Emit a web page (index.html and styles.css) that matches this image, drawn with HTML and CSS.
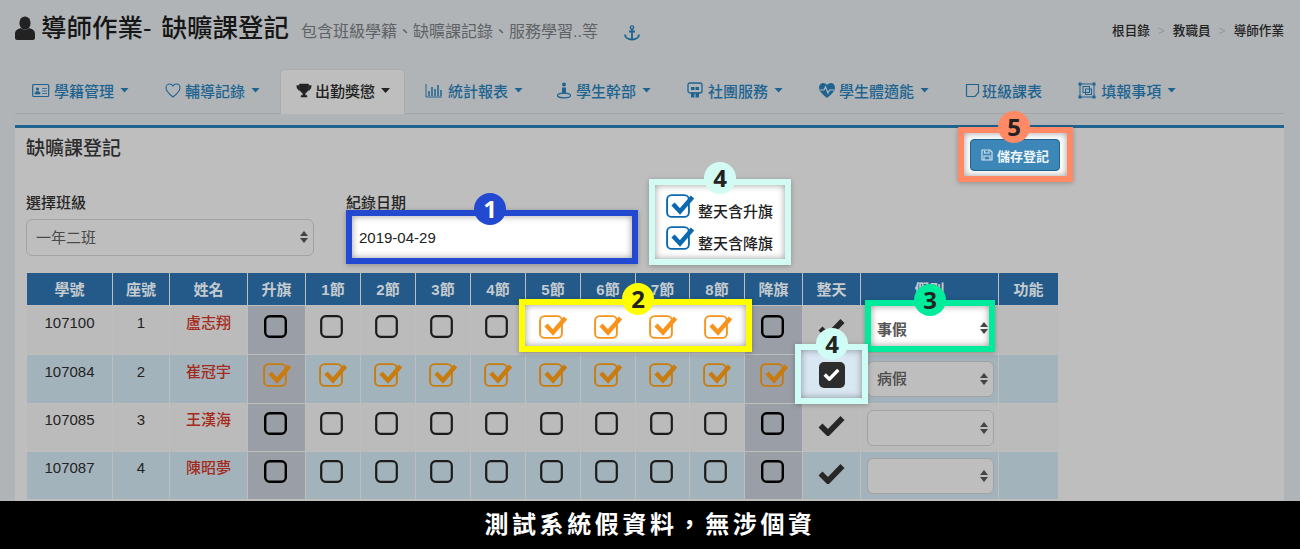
FILE: index.html
```html
<!DOCTYPE html>
<html lang="zh-Hant">
<head>
  <meta charset="UTF-8">
  <title>導師作業- 缺曠課登記</title>
  <link rel="stylesheet" href="styles.css">
</head>
<body>
  <svg class="defs" width="0" height="0">
    <symbol id="box" viewBox="0 0 28 24"><rect x="2.2" y="2.2" width="20.6" height="20.6" rx="4.5" fill="none" stroke="currentColor"/></symbol>
    <symbol id="tick" viewBox="0 0 28 24"><rect x="1.1" y="1.1" width="21.8" height="21.8" rx="4.5" fill="none" stroke="currentColor" stroke-width="1.9"/><path d="M7 10l7 7.500L26.500 3" fill="none" stroke="currentColor" stroke-width="4.5"/></symbol>
    <symbol id="heavy" viewBox="0 0 27 21"><path d="M2.500 10.500l7.500 7.500L24.500 3" fill="none" stroke="currentColor" stroke-width="5.600"/></symbol>
  </svg>

  <header class="page-head">
    <h1 class="page-title">
      <svg width="20" height="24" viewBox="0 0 20 24"><ellipse cx="10" cy="7" rx="5.6" ry="6.6" fill="#222"/><path d="M0 22v-4c0-4 3-5 6-6 2 2 6 2 8 0 3 1 6 2 6 6v4c0 1-1 2-2 2H2c-1 0-2-1-2-2z" fill="#222"/></svg>
      導師作業- 缺曠課登記
    </h1>
    <span class="page-sub">包含班級學籍、缺曠課記錄、服務學習..等</span>
    <svg class="anchor" width="16" height="16" viewBox="0 0 16 16"><circle cx="8" cy="2.6" r="1.7" fill="none" stroke="#1f6491" stroke-width="1.4"/><path d="M8 4v10.5M5 6.5h6M1 9.5c0 3 3 5 7 5s7-2 7-5" fill="none" stroke="#1f6491" stroke-width="1.8"/></svg>
    <ol class="crumbs">
      <li>根目錄</li>
      <li>教職員</li>
      <li>導師作業</li>
    </ol>
  </header>

  <ul class="tabs">
    <li><a href="#"><svg width="22" height="17" viewBox="0 0 22 17"><rect x=".7" y="2.5" width="16" height="12" rx="1" fill="none" stroke="currentColor" stroke-width="1.2"/><circle cx="5.5" cy="7" r="1.6" fill="currentColor"/><path d="M3 12c0-2 1-2.5 2.5-2.5S8 10 8 12zM10 6.500h5M10 9h5M10 11.500h5" fill="currentColor" stroke="currentColor" stroke-width=".8"/></svg>學籍管理<i class="caret"></i></a></li>
    <li><a href="#"><svg width="20" height="17" viewBox="0 0 20 17"><path d="M8 15C3 11 1 8.500 1 6c0-2.500 1.800-4 3.700-4C6 2 7.300 2.800 8 4c.7-1.200 2-2 3.300-2C13.200 2 15 3.500 15 6c0 2.500-2 5-7 9z" fill="none" stroke="currentColor" stroke-width="1.1"/></svg>輔導記錄<i class="caret"></i></a></li>
    <li class="is-on"><a href="#"><svg width="19" height="17" viewBox="0 0 19 17"><path d="M3.500 2h9v4c0 3-2 4.500-3.300 5v2.500H11V15H5v-1.500h1.800V11C5.500 10.500 3.500 9 3.500 6zM3.500 3.500H.8c0 3 1 4.500 3.200 5M12.500 3.500h2.700c0 3-1 4.500-3.200 5" fill="currentColor" stroke="currentColor" stroke-width=".5" fill-rule="evenodd"/></svg>出勤獎懲<i class="caret"></i></a></li>
    <li class="tab-near"><a href="#"><svg width="23" height="17" viewBox="0 0 23 17"><path d="M1 2v13h16" fill="none" stroke="currentColor" stroke-width="1"/><path d="M4 9v5M7 5v9M10 7v7M13 3v11M16 8v6" stroke="currentColor" stroke-width="1.500"/></svg>統計報表<i class="caret"></i></a></li>
    <li><a href="#"><svg width="20" height="17" viewBox="0 0 20 17"><circle cx="8" cy="2.500" r="2" fill="currentColor"/><path d="M6 5.500h4v6H6z" fill="currentColor"/><ellipse cx="8" cy="13.500" rx="6.500" ry="2.300" fill="none" stroke="currentColor" stroke-width="1.200"/></svg>學生幹部<i class="caret"></i></a></li>
    <li><a href="#"><svg width="21" height="17" viewBox="0 0 21 17"><path d="M3 1h10c1.500 0 2 1 2 2v6c0 1-1 2-2 2H3c-1 0-2-1-2-2V3c0-1 .5-2 2-2z" fill="none" stroke="currentColor" stroke-width="1.300"/><path d="M4 5h3.500v3H4zM8.500 5H12v3H8.500zM4 10.500h3.500v5H4zM8.500 10.500H12v5H8.500z" fill="currentColor"/></svg>社團服務<i class="caret"></i></a></li>
    <li><a href="#"><svg width="20" height="17" viewBox="0 0 20 17"><path d="M8 16C3 12 0 9 0 5.500 0 3 2 1 4.300 1 6 1 7.300 2 8 3c.7-1 2-2 3.700-2C14 1 16 3 16 5.500 16 9 13 12 8 16z" fill="currentColor"/><path d="M1 8h4l1.500-3L9 11l1.500-3H15" fill="none" stroke="#b1b5b8" stroke-width="1.200"/></svg>學生體適能<i class="caret"></i></a></li>
    <li><a href="#"><svg width="17" height="17" viewBox="0 0 17 17"><path d="M1.500 2.500h12v8l-3.500 4H2.500c-.6 0-1-.4-1-1z" fill="none" stroke="currentColor" stroke-width="1.200"/></svg>班級課表</a></li>
    <li><a href="#"><svg width="23" height="17" viewBox="0 0 23 17"><rect x="2" y="2" width="14" height="13" fill="none" stroke="currentColor" stroke-width="1"/><rect x="5" y="4.500" width="6.500" height="6" fill="none" stroke="currentColor" stroke-width="1"/><rect x="7.500" y="7" width="6" height="5.500" fill="none" stroke="currentColor" stroke-width="1"/><path d="M.5.500h3v3h-3zM14.500.500h3v3h-3zM.5 13.500h3v3h-3zM14.500 13.500h3v3h-3z" fill="currentColor"/></svg>填報事項<i class="caret"></i></a></li>
  </ul>

  <main class="panel">
    <div class="panel-inner">
      <div class="panel-top">
        <h2 class="panel-title">缺曠課登記</h2>
        <div class="spot spot-save">
          <span class="badge badge-5">5</span>
          <button class="btn-save" type="button"><svg width="12" height="12" viewBox="0 0 12 12"><path d="M1 1h8l2 2v8H1z" fill="none" stroke="#cfe0ec" stroke-width="1.200"/><path d="M3.500 1.500v2.500h4.500V1.500M3 11V7h6v4" fill="none" stroke="#cfe0ec" stroke-width="1.100"/></svg>儲存登記</button>
        </div>
      </div>

      <div class="filters">
        <div class="field-class">
          <label class="lbl">選擇班級</label>
          <div class="pick pick-big">一年二班<i class="updown"></i></div>
        </div>
        <div class="field-date">
          <label class="lbl">紀錄日期</label>
          <div class="spot spot-date">
            <span class="badge badge-1">1</span>
            2019-04-29
          </div>
        </div>
        <div class="spot spot-flags">
          <span class="badge badge-4a">4</span>
          <div class="flag-line"><svg width="28" height="24"><use href="#tick"/></svg>整天含升旗</div>
          <div class="flag-line"><svg width="28" height="24"><use href="#tick"/></svg>整天含降旗</div>
        </div>
      </div>

      <div class="grid-wrap">
        <table class="grid">
          <colgroup>
            <col class="c85"><col class="c56"><col class="c77"><col class="c57">
            <col class="c54"><col class="c54"><col class="c54"><col class="c54">
            <col class="c54"><col class="c54"><col class="c53"><col class="c54">
            <col class="c57"><col class="c57"><col class="c137"><col class="c59">
          </colgroup>
          <thead>
            <tr><th>學號</th><th>座號</th><th>姓名</th><th>升旗</th><th>1節</th><th>2節</th><th>3節</th><th>4節</th><th>5節</th><th>6節</th><th>7節</th><th>8節</th><th>降旗</th><th>整天</th><th>假別</th><th>功能</th></tr>
          </thead>
          <tbody>
            <tr>
              <td>107100</td><td>1</td><td class="name">盧志翔</td>
              <td class="flag"><svg class="off"><use href="#box"/></svg></td>
              <td><svg class="off"><use href="#box"/></svg></td><td><svg class="off"><use href="#box"/></svg></td><td><svg class="off"><use href="#box"/></svg></td><td><svg class="off"><use href="#box"/></svg></td>
              <td></td><td></td><td></td><td></td>
              <td class="flag"><svg class="off"><use href="#box"/></svg></td>
              <td><svg class="all"><use href="#heavy"/></svg></td><td class="kind"></td><td></td>
            </tr>
            <tr class="even">
              <td>107084</td><td>2</td><td class="name">崔冠宇</td>
              <td class="flag"><svg class="on"><use href="#tick"/></svg></td>
              <td><svg class="on"><use href="#tick"/></svg></td><td><svg class="on"><use href="#tick"/></svg></td><td><svg class="on"><use href="#tick"/></svg></td><td><svg class="on"><use href="#tick"/></svg></td>
              <td><svg class="on"><use href="#tick"/></svg></td><td><svg class="on"><use href="#tick"/></svg></td><td><svg class="on"><use href="#tick"/></svg></td><td><svg class="on"><use href="#tick"/></svg></td>
              <td class="flag"><svg class="on"><use href="#tick"/></svg></td>
              <td></td><td class="kind"><div class="pick pick-row">病假<i class="updown"></i></div></td><td></td>
            </tr>
            <tr class="short">
              <td>107085</td><td>3</td><td class="name">王漢海</td>
              <td class="flag"><svg class="off"><use href="#box"/></svg></td>
              <td><svg class="off"><use href="#box"/></svg></td><td><svg class="off"><use href="#box"/></svg></td><td><svg class="off"><use href="#box"/></svg></td><td><svg class="off"><use href="#box"/></svg></td>
              <td><svg class="off"><use href="#box"/></svg></td><td><svg class="off"><use href="#box"/></svg></td><td><svg class="off"><use href="#box"/></svg></td><td><svg class="off"><use href="#box"/></svg></td>
              <td class="flag"><svg class="off"><use href="#box"/></svg></td>
              <td><svg class="all"><use href="#heavy"/></svg></td><td class="kind"><div class="pick pick-row">&nbsp;<i class="updown"></i></div></td><td></td>
            </tr>
            <tr class="even short">
              <td>107087</td><td>4</td><td class="name">陳昭夢</td>
              <td class="flag"><svg class="off"><use href="#box"/></svg></td>
              <td><svg class="off"><use href="#box"/></svg></td><td><svg class="off"><use href="#box"/></svg></td><td><svg class="off"><use href="#box"/></svg></td><td><svg class="off"><use href="#box"/></svg></td>
              <td><svg class="off"><use href="#box"/></svg></td><td><svg class="off"><use href="#box"/></svg></td><td><svg class="off"><use href="#box"/></svg></td><td><svg class="off"><use href="#box"/></svg></td>
              <td class="flag"><svg class="off"><use href="#box"/></svg></td>
              <td><svg class="all"><use href="#heavy"/></svg></td><td class="kind"><div class="pick pick-row">&nbsp;<i class="updown"></i></div></td><td></td>
            </tr>
          </tbody>
        </table>

        <!-- tutorial highlights over the table -->
        <div class="spot over-periods">
          <span class="badge badge-2">2</span>
          <svg class="on"><use href="#tick"/></svg><svg class="on"><use href="#tick"/></svg><svg class="on"><use href="#tick"/></svg><svg class="on"><use href="#tick"/></svg>
        </div>
        <div class="spot over-kind">
          <span class="badge badge-3">3</span>
          事假<i class="updown"></i>
        </div>
        <div class="spot over-day">
          <span class="badge badge-4b">4</span>
          <span class="day-box"><svg width="17" height="13" viewBox="0 0 27 21"><use href="#heavy"/></svg></span>
        </div>
      </div>
    </div>
  </main>

  <footer class="notice">測試系統假資料&#xFF0C;無涉個資</footer>
</body>
</html>
```

FILE: styles.css
```css
* {
  margin: 0;
  padding: 0;
  box-sizing: border-box;
}

html, body {
  height: 549px;
  overflow: hidden;
}

body {
  background: #b0b4b7;
  color: #222;
  font-family: "Liberation Sans", "Noto Sans CJK TC", sans-serif;
  font-size: 15px;
}

.defs {
  position: absolute;
}

/* page header */
.page-head {
  display: flex;
  align-items: flex-start;
  height: 69px;
  padding: 12px 16px 0 15px;
}

.page-title {
  display: flex;
  align-items: center;
  gap: 6px;
  font-size: 25.5px;
  font-weight: 500;
  line-height: 32px;
  word-spacing: 3px;
  color: #161616;
  white-space: nowrap;
}

.page-sub {
  margin: 9px 0 0 12px;
  font-size: 16px;
  line-height: 22px;
  color: #5f6265;
}

.anchor {
  margin: 13px 0 0 26px;
}

.crumbs {
  display: flex;
  margin: 9px 0 0 auto;
  list-style: none;
  font-size: 12.6px;
  font-weight: 500;
  line-height: 20px;
  color: #222;
}

.crumbs li + li::before {
  content: ">";
  padding: 0 8px;
  color: #999;
  font-size: 12px;
}

/* tabs */
.tabs {
  display: flex;
  height: 45px;
  margin: 0 16px 0 15px;
  padding-left: 1px;
  border-bottom: 1px solid #a3a6a9;
  list-style: none;
}

.tabs li {
  margin-right: 4px;
}

.tabs .tab-near {
  margin-right: 1px;
}

.tabs a {
  display: flex;
  align-items: center;
  height: 44px;
  padding: 0 16px 2px;
  color: #1f6491;
  font-weight: 500;
  text-decoration: none;
  white-space: nowrap;
}

.tabs .is-on a {
  height: 45px;
  padding: 0 14px 3px 15px;
  color: #222;
  background: #bebebe;
  border: 1px solid #a9abad;
  border-bottom: 0;
  border-radius: 5px 5px 0 0;
}

.caret {
  width: 9px;
  height: 5px;
  margin-left: 6px;
  background: currentColor;
  clip-path: polygon(0 0, 100% 0, 50% 100%);
}

/* panel */
.panel {
  height: 424px;
  margin: 11px 16px 0 15px;
  padding: 0 11px;
  background: #bebebe;
  border-top: 3px solid #1f6491;
}

.panel-inner {
  width: 1034px;
}

.panel-top {
  display: flex;
  justify-content: space-between;
  align-items: flex-start;
  padding-top: 11px;
}

.panel-title {
  margin-top: -2px;
  font-size: 19px;
  font-weight: 500;
  line-height: 24px;
  color: #2b2b2b;
}

.btn-save {
  display: flex;
  align-items: center;
  justify-content: center;
  gap: 4px;
  width: 90px;
  height: 32px;
  color: #eef4f8;
  background: #3c87b8;
  border: 1px solid #21638f;
  border-radius: 4px;
  font: bold 13px "Liberation Sans", "Noto Sans CJK TC", sans-serif;
}

.filters {
  display: flex;
  align-items: flex-start;
  margin-top: 22px;
}

.lbl {
  display: block;
  font-weight: 500;
  line-height: 20px;
  color: #262626;
}

.field-class {
  width: 288px;
  margin-right: 32px;
}

.field-date {
  width: 292px;
}

/* fake selects */
.pick {
  display: flex;
  align-items: center;
  justify-content: space-between;
  color: #4a4a4a;
  background: #bebebe;
  border: 1px solid #a2a2a2;
  border-radius: 6px;
}

.pick-big {
  height: 37px;
  margin-top: 6px;
  padding: 0 5px 2px 9px;
}

.pick-row {
  width: 127px;
  height: 36px;
  margin: 6px 0 0 6px;
  padding: 0 5px 0 9px;
  font-weight: 500;
  text-align: left;
}

.updown {
  display: flex;
  flex-direction: column;
  gap: 2px;
  margin-left: auto;
}

.updown::before,
.updown::after {
  content: "";
  border-left: 4px solid transparent;
  border-right: 4px solid transparent;
}

.updown::before {
  border-bottom: 5px solid #444;
}

.updown::after {
  border-top: 5px solid #444;
}

/* tutorial highlights */
.spot {
  position: relative;
  background: #fff;
  border: 6px solid;
  box-shadow: inset 0 0 7px rgba(0, 0, 0, .4), 0 1px 5px rgba(0, 0, 0, .25);
}

.badge {
  position: absolute;
  top: -22px;
  width: 32px;
  height: 32px;
  border-radius: 50%;
  color: #222;
  font: bold 24px/32px "Open Sans", "Liberation Sans", sans-serif;
  text-align: center;
  z-index: 2;
}

.spot-save {
  margin: -12px -13px -11px 0;
  padding: 6px 7px 5px 6px;
  border-color: #ff8a65;
}

.badge-5 {
  left: 34px;
  background: #ff8a65;
}

.spot-date {
  display: flex;
  align-items: center;
  width: 292px;
  height: 54px;
  margin: -3px 0 -8px;
  padding-left: 7px;
  border-color: #2349d0;
}

.badge-1 {
  left: 122px;
  top: -23px;
  color: #fff;
  background: #2349d0;
}

.spot-flags {
  flex: none;
  width: 142px;
  height: 86px;
  margin: -14px 0 -9px 11px;
  padding: 9px 0 0 11px;
  border-color: #d2fbf3;
  font-weight: 500;
  color: #222;
}

.badge-4a {
  left: 49px;
  top: -23px;
  background: #d2fbf3;
}

.flag-line {
  display: flex;
  align-items: flex-start;
  gap: 4px;
  height: 32px;
  padding-top: 8px;
  line-height: 20px;
  white-space: nowrap;
}

.flag-line svg {
  flex: none;
  margin-top: -8px;
  color: #0b69b1;
}

/* table */
.grid-wrap {
  position: relative;
  margin-top: 16px;
}

.grid {
  table-layout: fixed;
  width: 1033px;
  border-spacing: 1px;
  text-align: center;
}

.c53 { width: 53px; }
.c54 { width: 54px; }
.c56 { width: 56px; }
.c57 { width: 57px; }
.c59 { width: 59px; }
.c77 { width: 77px; }
.c85 { width: 85px; }
.c137 { width: 137px; }

.grid th {
  height: 32px;
  padding-bottom: 2px;
  color: #c5cbcf;
  background: #235a8a;
  font-weight: 700;
}

.grid td {
  height: 48px;
  padding-top: 7px;
  line-height: 20px;
  vertical-align: top;
  background: #bbb;
  color: #232323;
}

.grid .short td {
  height: 47px;
  padding-top: 6px;
}

.grid .kind,
.grid .short .kind {
  padding-top: 0;
}

.grid .even td {
  background: #a3b3bb;
}

.grid .flag,
.grid .even .flag {
  background: #9a9ea7;
}

.grid .name {
  color: #a52b20;
  font-weight: 500;
}

.grid svg {
  display: block;
  margin: 1px auto 0;
}

.off,
.on {
  width: 28px;
  height: 24px;
}

.off {
  color: #1c1c1c;
  stroke-width: 2.2;
}

.flag .off {
  color: #000;
  stroke-width: 2.4;
}

.on {
  color: #c87c10;
}

.grid .all {
  width: 27px;
  height: 21px;
  margin-top: 5px;
  color: #272727;
}

.over-periods {
  position: absolute;
  left: 493px;
  top: 27px;
  display: flex;
  gap: 27px;
  width: 233px;
  height: 53px;
  padding: 10px 0 0 14px;
  border-color: #ffff00;
}

.over-periods svg {
  flex: none;
  color: #f7941d;
}

.badge-2 {
  left: 97px;
  background: #ffff00;
}

.over-kind {
  position: absolute;
  left: 839px;
  top: 28px;
  display: flex;
  align-items: center;
  width: 130px;
  height: 52px;
  padding: 4px 1px 0 6px;
  border-color: #00eb9b;
  color: #555;
  font-weight: 700;
}

.badge-3 {
  left: 43px;
  background: #00eb9b;
}

.over-day {
  position: absolute;
  left: 769px;
  top: 72px;
  display: flex;
  align-items: center;
  justify-content: center;
  width: 73px;
  height: 60px;
  background: #d9e7f3;
  border-color: #cffcf4;
}

.badge-4b {
  left: 15px;
  background: #cffcf4;
}

.day-box {
  display: flex;
  align-items: center;
  justify-content: center;
  width: 26px;
  height: 26px;
  margin-top: 1px;
  color: #fff;
  background: #2d2d2d;
  border-radius: 5px;
}

.day-box svg {
  color: #fff;
}

.notice {
  position: fixed;
  left: 0;
  right: 0;
  bottom: 0;
  height: 48px;
  background: #000;
  color: #fff;
  font-size: 24px;
  font-weight: 700;
  line-height: 48px;
  letter-spacing: 3.6px;
  text-align: center;
}
```
